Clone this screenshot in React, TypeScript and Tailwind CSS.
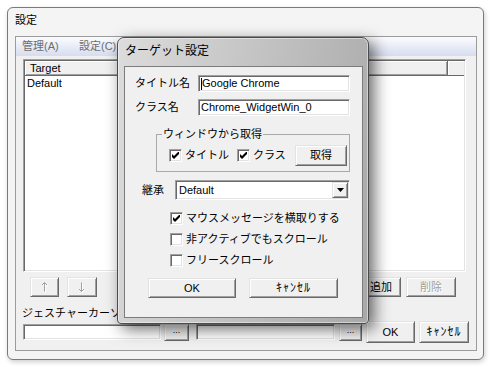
import React from "react";

const raised =
  "border border-t-[#e3e3e3] border-l-[#e3e3e3] border-r-[#696969] border-b-[#696969] shadow-[inset_1px_1px_0_#fff,inset_-1px_-1px_0_#a0a0a0] bg-[#f0f0f0]";
const sunken =
  "border border-t-[#a0a0a0] border-l-[#a0a0a0] border-r-white border-b-white shadow-[inset_1px_1px_0_#696969,inset_-1px_-1px_0_#e3e3e3]";

function Button({
  children,
  className = "",
  disabled = false,
}: {
  children: React.ReactNode;
  className?: string;
  disabled?: boolean;
}) {
  return (
    <div
      className={`${raised} flex items-center justify-center leading-none shrink-0 ${
        disabled ? "text-[#a0a0a0] [text-shadow:1px_1px_0_#fff]" : "text-black"
      } ${className}`}
    >
      {children}
    </div>
  );
}

function Field({ children, className = "" }: { children?: React.ReactNode; className?: string }) {
  return (
    <div
      className={`${sunken} bg-white flex items-center pl-[2px] leading-none whitespace-nowrap overflow-hidden shrink-0 ${className}`}
    >
      {children}
    </div>
  );
}

function Check({ checked }: { checked?: boolean }) {
  return (
    <span
      className={`${sunken} w-[13px] h-[13px] bg-white flex items-center justify-center shrink-0`}
    >
      {checked && (
        <svg width="7" height="7" viewBox="0 0 7 7">
          <path d="M0 2 L2 4 L7 -1 L7 2 L2 7 L0 5 Z" fill="#000" />
        </svg>
      )}
    </span>
  );
}

// thin disabled arrow, drawn with a white emboss like classic grayed text
function Arrow({ down }: { down?: boolean }) {
  const d = down ? "M3.5 0.5 V9.5 M1 7 L3.5 9.5 L6 7" : "M3.5 0.5 V9.5 M1 3 L3.5 0.5 L6 3";
  return (
    <svg width="8" height="11" viewBox="0 0 8 11" fill="none">
      <path d={d} transform="translate(1 1)" stroke="#fff" strokeWidth="1" />
      <path d={d} stroke="#a0a0a0" strokeWidth="1" />
    </svg>
  );
}

function MainWindow() {
  return (
    <div className="w-[477px] h-[353px] rounded-[6px] border border-[#7a7a7a] bg-[#f4f4f4] flex flex-col pl-[7px] pr-[6px] pb-[8px] shadow-[1px_2px_5px_rgba(0,0,0,0.2)]">
      <div className="h-[28px] flex items-center pb-[3px] shrink-0">設定</div>
      <div className="flex-1 border border-[#9b9b9b] bg-[#f0f0f0] flex flex-col">
        {/* menu */}
        <div className="h-[19px] shrink-0 flex items-center pl-[6px] text-[#6d6d6d] bg-[linear-gradient(#fbfcfe,#d6ddef)]">
          <span className="w-[57px]">管理(A)</span>
          <span>設定(C)</span>
        </div>

        {/* list view */}
        <div className={`${sunken} mt-[3px] ml-[7px] w-[443px] h-[213px] shrink-0 bg-white flex flex-col p-px`}>
          <div className="flex h-[15px] shrink-0 leading-none">
            <div className="w-[423px] flex items-center pl-[5px] bg-[#f0f0f0] border-r border-b border-r-[#696969] border-b-[#696969] shadow-[inset_1px_1px_0_#fff,inset_-1px_-1px_0_#a0a0a0]">
              Target
            </div>
            <div className="flex-1 bg-[#f0f0f0] border-b border-b-[#696969] shadow-[inset_1px_1px_0_#fff]" />
          </div>
          <div className="pl-[2px] h-[14px] flex items-center leading-none">Default</div>
        </div>

        {/* list buttons */}
        <div className="mt-[5px] h-[20px] flex shrink-0">
          <Button disabled className="ml-[14px] w-[29px]"><Arrow /></Button>
          <Button disabled className="ml-[8px] w-[30px]"><Arrow down /></Button>
          <Button className="ml-auto w-[40px]">追加</Button>
          <Button disabled className="ml-[5px] mr-[20px] w-[50px]">削除</Button>
        </div>

        <div className="mt-[10px] pl-[6px] leading-[13px] h-[13px] shrink-0">ジェスチャーカーソル</div>

        <div className="mt-px h-[22px] flex items-center pl-[7px] shrink-0">
          <Field className="w-[138px] h-[16px]" />
          <Button className="ml-[3px] w-[25px] h-[17px] text-[9px] pb-[3px]">...</Button>
          <Field className="ml-[7px] w-[139px] h-[16px]" />
          <Button className="ml-[4px] w-[23px] h-[17px] text-[9px] pb-[3px]">...</Button>
          <Button className="ml-[4px] w-[49px] h-[22px]">OK</Button>
          <Button className="ml-[4px] w-[50px] h-[22px] text-[12px] tracking-[1px]">ｷｬﾝｾﾙ</Button>
        </div>
      </div>
    </div>
  );
}

function TargetDialog() {
  return (
    <div className="absolute left-[117px] top-[37px] w-[252px] h-[287px] rounded-t-[7px] rounded-b-[4px] border border-[#4b4b4b] bg-[linear-gradient(100deg,#dcdcdc,#a8a8a8)] shadow-[inset_0_0_0_1px_rgba(255,255,255,0.45),5px_5px_16px_rgba(0,0,0,0.6)] flex flex-col pl-[6px] pr-[5px] pb-[5px]">
      <div className="h-[28px] flex items-center pb-[3px] pl-px text-[12px] shrink-0">ターゲット設定</div>
      <div className="flex-1 border border-[#7c7c7c] bg-[#f0f0f0] flex flex-col">
        <div className="mt-[8px] pl-[10px] h-[17px] flex items-center shrink-0">
          <span className="w-[63px]">タイトル名</span>
          <Field className="w-[152px] h-[17px]">
            <span className="inline-block w-px h-[12px] bg-black" />
            Google Chrome
          </Field>
        </div>
        <div className="mt-[7px] pl-[10px] h-[17px] flex items-center shrink-0">
          <span className="w-[63px]">クラス名</span>
          <Field className="w-[152px] h-[17px]">Chrome_WidgetWin_0</Field>
        </div>

        <fieldset className="mt-[12px] ml-[31px] w-[194px] border border-[#a9a9a9] pl-[5px] pt-[4px] pb-[5px] shrink-0">
          <legend className="px-px leading-[13px]">ウィンドウから取得</legend>
          <div className="flex items-center pl-[7px]">
            <div className="w-[68px] flex items-center">
              <Check checked />
              <span className="ml-[3px]">タイトル</span>
            </div>
            <div className="w-[58px] flex items-center">
              <Check checked />
              <span className="ml-[3px]">クラス</span>
            </div>
            <Button className="w-[52px] h-[21px]">取得</Button>
          </div>
        </fieldset>

        <div className="mt-[8px] pl-[17px] h-[20px] flex items-center shrink-0">
          <span className="w-[33px]">継承</span>
          <div className={`${sunken} w-[175px] h-[20px] bg-white flex p-px`}>
            <span className="flex-1 flex items-center pl-[2px] leading-none">Default</span>
            <Button className="w-[16px] h-[16px]">
              <svg width="7" height="4" viewBox="0 0 7 4">
                <path d="M0 0 H7 L3.5 4 Z" fill="#000" />
              </svg>
            </Button>
          </div>
        </div>

        <div className="mt-[8px] flex flex-col pl-[45px] shrink-0">
          <div className="h-[21px] flex items-center">
            <Check checked />
            <span className="ml-[3px]">マウスメッセージを横取りする</span>
          </div>
          <div className="h-[21px] flex items-center">
            <Check />
            <span className="ml-[3px]">非アクティブでもスクロール</span>
          </div>
          <div className="h-[21px] flex items-center">
            <Check />
            <span className="ml-[3px]">フリースクロール</span>
          </div>
        </div>

        <div className="mt-[7px] pl-[23px] flex shrink-0">
          <Button className="w-[88px] h-[20px]">OK</Button>
          <Button className="ml-[13px] w-[89px] h-[20px] text-[12px] tracking-[1px]">ｷｬﾝｾﾙ</Button>
        </div>
      </div>
    </div>
  );
}

export default function App() {
  return (
    <div className="relative w-[490px] h-[367px] overflow-hidden bg-white pl-[7px] pt-[7px] font-['Liberation_Sans','Noto_Sans_CJK_JP',sans-serif] text-[11px] text-black">
      <MainWindow />
      <TargetDialog />
    </div>
  );
}
